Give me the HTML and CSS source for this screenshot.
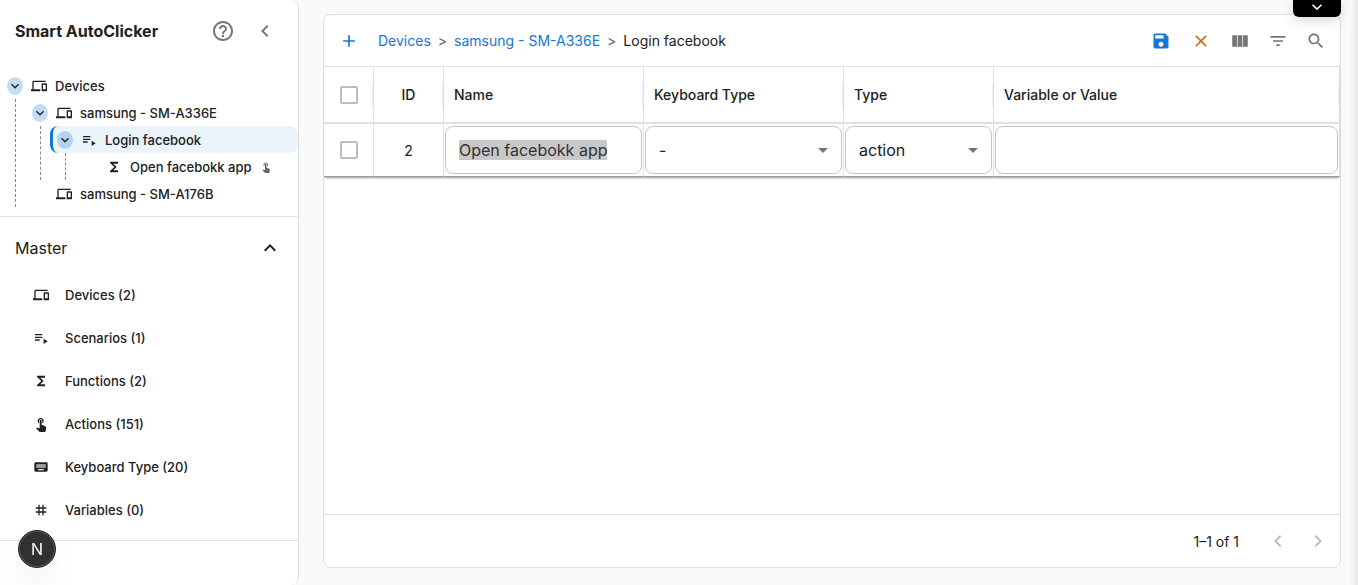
FILE: index.html
```html
<!DOCTYPE html>
<html lang="en">
<head>
    <meta charset="UTF-8">
    <meta name="viewport" content="width=device-width, initial-scale=1.0">
    <title>Smart AutoClicker</title>
    <link rel="stylesheet" href="styles.css">
</head>
<body>
    <!-- Icon sprite -->
    <svg class="sprite" aria-hidden="true">
        <symbol id="i-devices" viewBox="0 0 24 24"><path d="M4 6h18V4H4c-1.1 0-2 .9-2 2v11H0v3h14v-3H4V6zm19 2h-6c-.55 0-1 .45-1 1v10c0 .55.45 1 1 1h6c.55 0 1-.45 1-1V9c0-.55-.45-1-1-1zm-1 9h-4v-7h4v7z"/></symbol>
        <symbol id="i-playlist" viewBox="0 0 24 24"><path d="M3 10h11v2H3zm0-4h11v2H3zm0 8h7v2H3zm13-1v8l6-4z"/></symbol>
        <symbol id="i-sigma" viewBox="0 0 24 24"><path d="M18 4H6v2l6.5 6L6 18v2h12v-3h-7l5-5-5-5h7z"/></symbol>
        <symbol id="i-touch" viewBox="0 0 24 24"><path d="M9 11.24V7.5C9 6.12 10.12 5 11.500 5S14 6.120 14 7.500v3.740c1.210-.81 2-2.180 2-3.740C16 5.010 13.990 3 11.500 3S7 5.010 7 7.500c0 1.560.79 2.930 2 3.740zm9.840 4.630-4.540-2.260c-.17-.07-.35-.11-.54-.11H13v-6c0-.83-.67-1.500-1.500-1.500S10 6.670 10 7.500v10.740c-3.600-.76-3.540-.75-3.670-.75-.31 0-.59.13-.79.33l-.79.8 4.940 4.940c.27.27.65.44 1.060.44h6.790c.75 0 1.330-.55 1.440-1.280l.75-5.270c.01-.07.02-.14.02-.2 0-.62-.38-1.160-.91-1.380z"/></symbol>
        <symbol id="i-keyboard" viewBox="0 0 24 24"><path d="M20 5H4c-1.100 0-2 .9-2 2v10c0 1.100.9 2 2 2h16c1.100 0 2-.9 2-2V7c0-1.100-.9-2-2-2zM5 8h14v5H5zm3 7h8v2H8z" fill-rule="evenodd"/><path d="M5 8h14v5H5z" opacity=".45"/></symbol>
        <symbol id="i-tag" viewBox="0 0 24 24"><path d="M20 10V8h-4V4h-2v4h-4V4H8v4H4v2h4v4H4v2h4v4h2v-4h4v4h2v-4h4v-2h-4v-4h4zm-6 4h-4v-4h4v4z"/></symbol>
        <symbol id="i-down" viewBox="0 0 24 24"><path d="M7.410 8.590 12 13.170l4.590-4.580L18 10l-6 6-6-6z"/></symbol>
        <symbol id="i-up" viewBox="0 0 24 24"><path d="m12 8-6 6 1.410 1.410L12 10.830l4.590 4.580L18 14z"/></symbol>
        <symbol id="i-left" viewBox="0 0 24 24"><path d="M15.410 7.410 14 6l-6 6 6 6 1.410-1.410L10.830 12z"/></symbol>
        <symbol id="i-right" viewBox="0 0 24 24"><path d="M8.590 16.590 13.170 12 8.590 7.410 10 6l6 6-6 6z"/></symbol>
        <symbol id="i-help" viewBox="0 0 24 24"><path d="M11 18h2v-2h-2v2zm1-16C6.480 2 2 6.480 2 12s4.480 10 10 10 10-4.480 10-10S17.520 2 12 2zm0 18c-4.410 0-8-3.590-8-8s3.590-8 8-8 8 3.590 8 8-3.590 8-8 8zm0-14c-2.210 0-4 1.790-4 4h2c0-1.100.9-2 2-2s2 .9 2 2c0 2-3 1.750-3 5h2c0-2.250 3-2.500 3-5 0-2.210-1.790-4-4-4z"/></symbol>
        <symbol id="i-add" viewBox="0 0 24 24"><path d="M19 13h-6v6h-2v-6H5v-2h6V5h2v6h6z"/></symbol>
        <symbol id="i-save" viewBox="0 0 24 24"><path d="M17 3H5c-1.110 0-2 .9-2 2v14c0 1.100.89 2 2 2h14c1.100 0 2-.9 2-2V7l-4-4zm-5 16c-1.660 0-3-1.340-3-3s1.340-3 3-3 3 1.340 3 3-1.340 3-3 3zm3-10H5V5h10v4z"/></symbol>
        <symbol id="i-close" viewBox="0 0 24 24"><path d="M19 6.410 17.590 5 12 10.590 6.410 5 5 6.410 10.590 12 5 17.590 6.410 19 12 13.410 17.590 19 19 17.590 13.410 12z"/></symbol>
        <symbol id="i-columns" viewBox="0 0 24 24"><path d="M2.670 5h5.660v14H2.670zm6.500 0h5.660v14H9.170zm6.500 0h5.660v14h-5.660z"/></symbol>
        <symbol id="i-filter" viewBox="0 0 24 24"><path d="M10 18h4v-2h-4v2zM3 6v2h18V6H3zm3 7h12v-2H6v2z"/></symbol>
        <symbol id="i-search" viewBox="0 0 24 24"><path d="M15.500 14h-.79l-.28-.27C15.410 12.590 16 11.110 16 9.500 16 5.910 13.090 3 9.500 3S3 5.910 3 9.500 5.910 16 9.500 16c1.610 0 3.090-.59 4.230-1.570l.27.28v.79l5 4.990L20.490 19l-4.990-5zm-6 0C7.010 14 5 11.990 5 9.500S7.010 5 9.500 5 14 7.010 14 9.500 11.990 14 9.500 14z"/></symbol>
        <symbol id="i-arrow" viewBox="0 0 24 24"><path d="m7 10 5 5 5-5z"/></symbol>
    </svg>

    <aside class="sidebar">
        <header class="sidebar-header">
            <h1>Smart AutoClicker</h1>
            <button class="icon-btn" aria-label="Help"><svg class="icon icon-lg"><use href="#i-help"/></svg></button>
            <button class="icon-btn" aria-label="Collapse sidebar"><svg class="icon icon-lg"><use href="#i-left"/></svg></button>
        </header>

        <nav class="tree" aria-label="Device tree">
            <ul>
                <li>
                    <div class="tree-row">
                        <button class="tree-toggle" aria-label="Toggle Devices"><svg class="icon icon-sm"><use href="#i-down"/></svg></button>
                        <svg class="icon icon-sm"><use href="#i-devices"/></svg>
                        <a href="#devices">Devices</a>
                    </div>
                    <ul>
                        <li>
                            <div class="tree-row">
                                <button class="tree-toggle" aria-label="Toggle SM-A336E"><svg class="icon icon-sm"><use href="#i-down"/></svg></button>
                                <svg class="icon icon-sm"><use href="#i-devices"/></svg>
                                <a href="#a336e">samsung - SM-A336E</a>
                            </div>
                            <ul>
                                <li>
                                    <div class="tree-row selected">
                                        <button class="tree-toggle" aria-label="Toggle Login facebook"><svg class="icon icon-sm"><use href="#i-down"/></svg></button>
                                        <svg class="icon icon-sm"><use href="#i-playlist"/></svg>
                                        <a href="#login">Login facebook</a>
                                    </div>
                                    <ul>
                                        <li>
                                            <div class="tree-row leaf">
                                                <svg class="icon icon-sm"><use href="#i-sigma"/></svg>
                                                <a href="#open">Open facebokk app</a>
                                                <svg class="icon icon-xs tree-hint"><use href="#i-touch"/></svg>
                                            </div>
                                        </li>
                                    </ul>
                                </li>
                            </ul>
                        </li>
                        <li>
                            <div class="tree-row leaf">
                                <svg class="icon icon-sm"><use href="#i-devices"/></svg>
                                <a href="#a176b">samsung - SM-A176B</a>
                            </div>
                        </li>
                    </ul>
                </li>
            </ul>
        </nav>

        <section class="master">
            <button class="master-header" aria-expanded="true">
                <span>Master</span>
                <svg class="icon icon-lg"><use href="#i-up"/></svg>
            </button>
            <ul class="master-list">
                <li><a href="#m-devices"><svg class="icon icon-sm"><use href="#i-devices"/></svg>Devices (2)</a></li>
                <li><a href="#m-scenarios"><svg class="icon icon-sm"><use href="#i-playlist"/></svg>Scenarios (1)</a></li>
                <li><a href="#m-functions"><svg class="icon icon-sm"><use href="#i-sigma"/></svg>Functions (2)</a></li>
                <li><a href="#m-actions"><svg class="icon icon-sm"><use href="#i-touch"/></svg>Actions (151)</a></li>
                <li><a href="#m-keyboard"><svg class="icon icon-sm"><use href="#i-keyboard"/></svg>Keyboard Type (20)</a></li>
                <li><a href="#m-variables"><svg class="icon icon-sm"><use href="#i-tag"/></svg>Variables (0)</a></li>
            </ul>
        </section>
    </aside>

    <main class="content">
        <div class="grid-card">
            <div class="toolbar">
                <button class="icon-btn add" aria-label="Add row"><svg class="icon icon-md"><use href="#i-add"/></svg></button>
                <nav class="breadcrumb" aria-label="Breadcrumb">
                    <a href="#devices">Devices</a>
                    <span class="sep">&gt;</span>
                    <a href="#a336e">samsung - SM-A336E</a>
                    <span class="sep">&gt;</span>
                    <span>Login facebook</span>
                </nav>
                <div class="toolbar-actions">
                    <button class="icon-btn save" aria-label="Save"><svg class="icon icon-md"><use href="#i-save"/></svg></button>
                    <button class="icon-btn cancel" aria-label="Cancel"><svg class="icon icon-md"><use href="#i-close"/></svg></button>
                    <button class="icon-btn" aria-label="Columns"><svg class="icon icon-md"><use href="#i-columns"/></svg></button>
                    <button class="icon-btn" aria-label="Filters"><svg class="icon icon-md"><use href="#i-filter"/></svg></button>
                    <button class="icon-btn" aria-label="Search"><svg class="icon icon-md"><use href="#i-search"/></svg></button>
                </div>
            </div>

            <table class="grid">
                <colgroup>
                    <col class="col-check">
                    <col class="col-id">
                    <col class="col-name">
                    <col class="col-keyboard">
                    <col class="col-type">
                    <col>
                </colgroup>
                <thead>
                    <tr>
                        <th class="center"><input type="checkbox" aria-label="Select all rows"></th>
                        <th class="center">ID</th>
                        <th>Name</th>
                        <th>Keyboard Type</th>
                        <th>Type</th>
                        <th>Variable or Value</th>
                    </tr>
                </thead>
                <tbody>
                    <tr>
                        <td class="center"><input type="checkbox" aria-label="Select row"></td>
                        <td class="center">2</td>
                        <td><input class="field" id="nameInput" type="text" aria-label="Name" value="Open facebokk app"></td>
                        <td>
                            <div class="select-wrap">
                                <select class="field" aria-label="Keyboard Type"><option>-</option></select>
                                <svg class="icon icon-lg"><use href="#i-arrow"/></svg>
                            </div>
                        </td>
                        <td>
                            <div class="select-wrap">
                                <select class="field" aria-label="Type"><option>action</option></select>
                                <svg class="icon icon-lg"><use href="#i-arrow"/></svg>
                            </div>
                        </td>
                        <td><input class="field" type="text" aria-label="Variable or Value"></td>
                    </tr>
                </tbody>
            </table>

            <footer class="grid-footer">
                <span>1–1 of 1</span>
                <button class="icon-btn" aria-label="Previous page" disabled><svg class="icon icon-lg"><use href="#i-left"/></svg></button>
                <button class="icon-btn" aria-label="Next page" disabled><svg class="icon icon-lg"><use href="#i-right"/></svg></button>
            </footer>
        </div>
    </main>

    <button class="top-tab" aria-label="Show header"><svg class="icon icon-md"><use href="#i-down"/></svg></button>
    <button class="dev-badge">N</button>
    <div class="edge-shadow"></div>

    <script>
        // the row opens in edit mode with its name selected
        const nameInput = document.getElementById('nameInput');
        nameInput.focus();
        nameInput.select();
    </script>
</body>
</html>
```
FILE: styles.css
```css
:root {
    --bg-color: #fafafa;
    --text-color: #212121;
    --muted: #757575;
    --primary: #1976d2;
    --border-color: #e0e0e0;
}

* {
    margin: 0;
    padding: 0;
    box-sizing: border-box;
}

body {
    display: flex;
    min-height: 100vh;
    background-color: var(--bg-color);
    color: var(--text-color);
    font-family: Inter, "Liberation Sans", sans-serif;
    font-size: 14px;
    overflow: hidden;
}

button, input, select {
    font: inherit;
    color: inherit;
}

button {
    background: none;
    border: none;
    cursor: pointer;
}

a {
    color: inherit;
    text-decoration: none;
}

ul {
    list-style: none;
}

.sprite {
    display: none;
}

.icon {
    display: block;
    flex: none;
    fill: currentColor;
}

.icon-xs { width: 12px; height: 12px; }
.icon-sm { width: 16px; height: 16px; }
.icon-md { width: 20px; height: 20px; }
.icon-lg { width: 24px; height: 24px; }

.icon-btn {
    display: flex;
    align-items: center;
    justify-content: center;
    width: 38px;
    height: 38px;
    color: var(--muted);
}

/* Sidebar */
.sidebar {
    flex: none;
    width: 299px;
    background-color: white;
    border-right: 1px solid var(--border-color);
    border-radius: 0 8px 8px 0;
}

.sidebar-header {
    display: flex;
    align-items: center;
    height: 62px;
    padding: 0 14px 0 15px;
    gap: 4px;
}

.sidebar-header h1 {
    flex: 1;
    font-size: 16px;
    font-weight: 700;
}

.tree {
    padding: 10px 0 9px;
    border-bottom: 1px solid var(--border-color);
    font-size: 13px;
    font-weight: 500;
}

.tree ul ul {
    margin-left: 15px;
    padding-left: 9px;
    border-left: 1px dashed #888;
}

.tree-row {
    display: flex;
    align-items: center;
    height: 27px;
    padding-left: 4px;
    gap: 8px;
    border-left: 3px solid transparent;
    border-radius: 8px;
    white-space: nowrap;
}

.tree-row.leaf {
    padding-left: 28px;
}

.tree-row.selected {
    background-color: #ebf3fb;
    border-left-color: var(--primary);
}

.tree-toggle {
    display: flex;
    align-items: center;
    justify-content: center;
    width: 16px;
    height: 18px;
    border-radius: 50%;
    background-color: #c5dcf5;
}

.selected .tree-toggle {
    background-color: #b5d3f1;
}

.tree-hint {
    color: #666;
}

.master {
    padding-bottom: 9px;
    border-bottom: 1px solid var(--border-color);
}

.master-header {
    display: flex;
    align-items: center;
    justify-content: space-between;
    width: 100%;
    height: 56px;
    padding: 6px 16px 0 15px;
    font-size: 16px;
}

.master-list a {
    display: flex;
    align-items: center;
    gap: 16px;
    height: 43px;
    padding-left: 33px;
    font-size: 13px;
    font-weight: 500;
}

/* Data grid */
.content {
    flex: 1;
    display: flex;
    min-width: 0;
    padding: 14px 17px 17px 24px;
}

.grid-card {
    flex: 1;
    display: flex;
    flex-direction: column;
    min-width: 0;
    background-color: white;
    border: 1px solid var(--border-color);
    border-radius: 8px;
}

.toolbar {
    display: flex;
    align-items: center;
    height: 52px;
    padding: 0 5px 0 6px;
    border-bottom: 1px solid var(--border-color);
}

.add {
    color: var(--primary);
}

.save {
    width: 40px;
    color: var(--primary);
}

.cancel {
    width: 40px;
    color: #c76a1c;
}

.breadcrumb {
    display: flex;
    gap: 7px;
    padding-left: 10px;
    white-space: nowrap;
}

.breadcrumb a {
    color: var(--primary);
}

.breadcrumb .sep {
    color: #666;
}

.toolbar-actions {
    display: flex;
    margin-left: auto;
}

.grid {
    width: 100%;
    table-layout: fixed;
    border-collapse: separate;
    border-spacing: 0;
    box-shadow: 0 2px 2px -1px rgba(0, 0, 0, 0.4);
}

.col-check { width: 50px; }
.col-id { width: 70px; }
.col-name, .col-keyboard { width: 200px; }
.col-type { width: 150px; }

.grid th {
    position: relative;
    height: 57px;
    padding: 0 10px;
    border-right: 1px solid var(--border-color);
    border-bottom: 2px solid var(--border-color);
    text-align: left;
    font-weight: 500;
}

/* resize handle */
.grid th::after {
    content: "";
    position: absolute;
    top: 16px;
    right: 0;
    width: 1px;
    height: 24px;
    background-color: #eee;
}

.grid td {
    height: 53px;
    padding: 2px 1px;
    border-right: 1px solid var(--border-color);
    border-bottom: 1px solid #999;
}

.grid .center {
    text-align: center;
}

.grid input[type="checkbox"] {
    appearance: none;
    display: block;
    width: 18px;
    height: 18px;
    margin: 0 auto;
    border: 2px solid #bdbdbd;
    border-radius: 2px;
}

.field {
    appearance: none;
    display: block;
    width: 100%;
    height: 48px;
    padding: 0 13px;
    border: 1px solid #c4c4c4;
    border-radius: 8px;
    background-color: white;
    font-size: 16px;
    outline: none;
}

.field::selection {
    background-color: #c8c8c8;
    color: #333;
}

.select-wrap {
    position: relative;
}

.select-wrap .icon {
    position: absolute;
    top: 12px;
    right: 7px;
    color: var(--muted);
    pointer-events: none;
}

.grid-footer {
    display: flex;
    align-items: center;
    justify-content: flex-end;
    height: 53px;
    margin-top: auto;
    padding-right: 3px;
    gap: 2px;
    border-top: 1px solid var(--border-color);
}

.grid-footer span {
    margin-right: 18px;
}

.grid-footer .icon-btn {
    color: #bdbdbd;
}

/* Floating pieces */
.top-tab {
    position: fixed;
    top: 0;
    right: 17px;
    display: flex;
    align-items: center;
    justify-content: center;
    width: 48px;
    height: 17px;
    padding-bottom: 4px;
    border-radius: 0 0 6px 6px;
    background-color: black;
    color: white;
    box-shadow: 0 4px 12px rgba(0, 0, 0, 0.15);
}

.dev-badge {
    position: fixed;
    left: 18px;
    bottom: 17px;
    width: 38px;
    height: 38px;
    border: 1px solid #2a2a2a;
    border-radius: 50%;
    background-color: #333031;
    color: white;
    font-size: 16px;
    box-shadow: inset 0 0 0 1px #555, 0 16px 32px -8px rgba(0, 0, 0, 0.15);
}

.edge-shadow {
    position: fixed;
    top: 0;
    right: 0;
    bottom: 0;
    width: 8px;
    background: linear-gradient(to right, #fafafa, #e8e8e8);
}
```
